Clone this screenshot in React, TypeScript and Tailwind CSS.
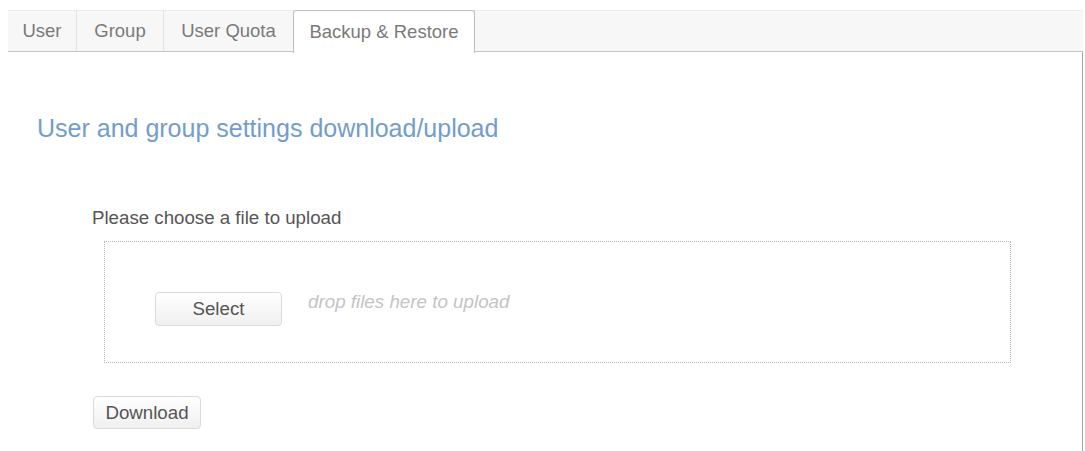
import { useState } from 'react';

/* ================= Tabs ================= */
const TABS = [
  { id: 'user', label: 'User', w: 'w-[68px]' },
  { id: 'group', label: 'Group', w: 'w-[87px]' },
  { id: 'quota', label: 'User Quota', w: 'w-[130px]' },
  { id: 'backup', label: 'Backup & Restore', w: 'w-[182px]' },
];

function TabBar({ active, onChange }: { active: string; onChange: (id: string) => void }) {
  return (
    <div className="flex h-[42px] border-t border-[#ececec] bg-[#f7f7f7]">
      {TABS.map((t, i) => {
        const isActive = t.id === active;
        return (
          <button
            key={t.id}
            type="button"
            onClick={() => onChange(t.id)}
            className={
              isActive
                ? `${t.w} -mt-px h-[43px] rounded-t-[3px] border border-b-0 border-[#bdbdbd] bg-white text-[18.5px] text-[#7a7a7a]`
                : `${t.w} h-[41px] border-b border-[#c4c4c4] text-[18.5px] text-[#7a7a7a] ${
                    i > 0 ? 'border-l border-l-[#e2e2e2]' : ''
                  }`
            }
          >
            {t.label}
          </button>
        );
      })}
      {/* rest of strip */}
      <div className="h-[41px] flex-1 border-b border-[#c4c4c4]" />
    </div>
  );
}

/* ================= Buttons ================= */
function GrayButton({ children, className = '' }: { children: React.ReactNode; className?: string }) {
  return (
    <button
      type="button"
      className={`rounded-[4px] border border-[#dadada] bg-gradient-to-b from-white to-[#f0f0f0] text-[18.7px] leading-[20px] text-[#555] ${className}`}
    >
      {children}
    </button>
  );
}

/* ================= App ================= */
export default function App() {
  const [tab, setTab] = useState('backup');

  return (
    <div className="h-[451px] w-full overflow-hidden bg-white pl-[8px] pr-[2px] pt-[10px] font-['Liberation_Sans',Arial,sans-serif]">
      <TabBar active={tab} onChange={setTab} />

      {/* Panel */}
      <div className="h-[400px] border-r border-[#a9a9a9] pt-[62px]">
        <h2 className="pl-[29px] text-[25px] leading-[28px] text-[#729dcc]">
          User and group settings download/upload
        </h2>

        <div className="mt-[66px] pl-[84px] text-[18.7px] leading-[20px] text-[#555]">
          Please choose a file to upload
        </div>

        {/* drop zone */}
        <div className="ml-[96px] mt-[13px] flex h-[122px] w-[907px] items-start border border-dotted border-[#b5b5b5] pl-[50px] pt-[50px]">
          <GrayButton className="h-[34px] w-[127px]">Select</GrayButton>
          <span className="ml-[26px] text-[18.8px] leading-[20px] italic text-[#c4c4c4]">
            drop files here to upload
          </span>
        </div>

        <GrayButton className="ml-[85px] mt-[33px] h-[33px] w-[108px]">Download</GrayButton>
      </div>
    </div>
  );
}
